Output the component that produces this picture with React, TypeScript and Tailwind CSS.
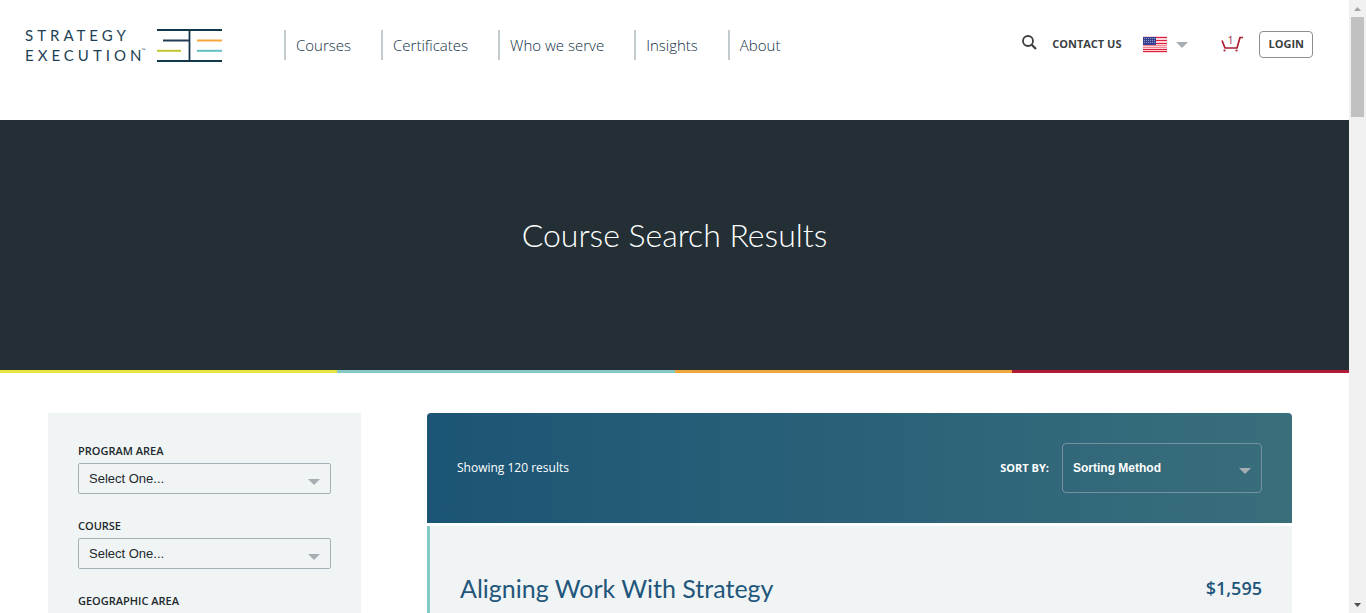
import React from 'react';

const navItems = ['Courses', 'Certificates', 'Who we serve', 'Insights', 'About'];
const filters = [
  { id: 'program-area', label: 'PROGRAM AREA' },
  { id: 'course', label: 'COURSE' },
  { id: 'geographic-area', label: 'GEOGRAPHIC AREA' },
];

function Caret({ className }: { className: string }) {
  return (
    <svg viewBox="0 0 12 6" className={className} aria-hidden="true">
      <path d="M0 0H12L6 6Z" fill="currentColor" />
    </svg>
  );
}

function Logo() {
  return (
    <a href="#" className="flex w-[197px] shrink-0 items-center justify-between">
      <span className="whitespace-nowrap font-['Lato'] text-[15px] leading-5 tracking-[4px] text-[#1d3f55]">
        STRATEGY
        <br />
        <span className="relative">
          EXECUTION
          <span className="absolute right-0 top-0 text-[5px] leading-[8px] tracking-normal">™</span>
        </span>
      </span>
      <svg viewBox="0 0 65 34" className="h-[34px] w-[65px]" fill="none" strokeWidth="2" aria-hidden="true">
        <path d="M0 2H65M0 33H65M32.500 1V33" stroke="#12364a" strokeWidth="1.800" />
        <path d="M6 12.500H32" stroke="#233b52" />
        <path d="M40 12.500H65" stroke="#f6a63a" />
        <path d="M0 22.800H24" stroke="#c3c62f" />
        <path d="M40 22.800H65" stroke="#62bfc5" />
      </svg>
    </a>
  );
}

function Flag() {
  return (
    <svg viewBox="0 0 24 17" className="h-[17px] w-6" shapeRendering="crispEdges" aria-hidden="true">
      <rect width="24" height="17" fill="#fbd3d8" />
      <path d="M0 1.500H24M0 4.500H24M0 7.500H24M0 13.500H24M0 15.500H24" stroke="#e0203a" />
      <path d="M0 9.500H24M0 11.500H24" stroke="#ee8791" />
      <rect y="1" width="13" height="8" fill="#37418f" />
      <path d="M1 2.500H12M1 4.500H12M1 6.500H12" stroke="#8d94c8" strokeDasharray="1 1" />
    </svg>
  );
}

function Header() {
  return (
    <header className="flex h-[120px] items-start pl-[25px] pr-9">
      <div className="flex pt-[25px]">
        <Logo />
      </div>
      <nav className="ml-[62px] flex gap-[30px] pt-[30px]">
        {navItems.map((item) => (
          <a
            key={item}
            href="#"
            className="h-[30px] whitespace-nowrap border-l-2 border-[#c3cbcf] pl-2.5 text-[15px] font-light leading-[30px] text-[#0f2f45]"
          >
            {item}
          </a>
        ))}
      </nav>
      <div className="ml-auto mt-[31px] flex h-[27px] items-center text-[11px] font-bold text-[#3b3f42]">
        <button type="button" aria-label="Search" className="mb-1 mr-[15px]">
          <svg viewBox="0 0 15 15" className="h-[15px] w-[15px]" fill="none" stroke="#3b3f42" aria-hidden="true">
            <circle cx="6" cy="6" r="5" strokeWidth="1.800" />
            <path d="M9.700 9.700L14 14" strokeWidth="2.200" />
          </svg>
        </button>
        <a href="#" className="mr-[22px] whitespace-nowrap">CONTACT US</a>
        <button type="button" aria-label="Choose country" className="mr-[33px] flex items-center gap-[9px]">
          <Flag />
          <Caret className="h-1.5 w-3 text-[#a6aeb3]" />
        </button>
        <a href="#" aria-label="Cart, 1 item" className="mb-1 mr-4">
          <svg viewBox="0 0 22 20" className="h-5 w-[22px]" aria-hidden="true">
            <path d="M1 7.500L4 15H16L19 4.500H22" fill="none" stroke="#a91e32" strokeWidth="1.700" />
            <circle cx="3.500" cy="17.500" r="1.100" fill="#a91e32" />
            <circle cx="15.500" cy="17.500" r="1.100" fill="#a91e32" />
            <text x="9.500" y="11" textAnchor="middle" fontSize="10" fontWeight="400" fill="#a01838">1</text>
          </svg>
        </a>
        <button type="button" className="h-[27px] rounded border border-[#8b8f92] px-2">LOGIN</button>
      </div>
    </header>
  );
}

function Scrollbar() {
  return (
    <div className="flex w-[17px] shrink-0 flex-col items-center bg-[#f1f1f1]" aria-hidden="true">
      <div className="flex h-[17px] items-center">
        <svg viewBox="0 0 7 4" className="h-1 w-[7px]"><path d="M0 4L3.500 0L7 4Z" fill="#a3a3a3" /></svg>
      </div>
      <div className="h-[100px] w-[13px] bg-[#c1c1c1]" />
      <div className="mt-auto flex h-[17px] items-center">
        <svg viewBox="0 0 7 4" className="h-1 w-[7px]"><path d="M0 0H7L3.500 4Z" fill="#505050" /></svg>
      </div>
    </div>
  );
}

export default function App() {
  return (
    <div className="flex h-screen bg-white font-['Open_Sans',sans-serif]">
      <div className="min-w-0 flex-1 overflow-hidden">
        <Header />
        <section className="flex h-[250px] items-center justify-center bg-[#232f35] pb-5">
          <h1 className="font-['Lato',sans-serif] text-[32px] font-light leading-10 text-white">
            Course Search Results
          </h1>
        </section>
        <div className="grid h-[3px] grid-cols-4">
          <div className="bg-[#e9e43c]" />
          <div className="bg-[#84c9c6]" />
          <div className="bg-[#f0a63a]" />
          <div className="bg-[#b3193a]" />
        </div>
        <main className="flex items-start gap-[66px] pl-12 pr-[57px] pt-10">
          <form className="flex w-[313px] shrink-0 flex-col gap-6 bg-[#f0f4f5] p-[30px]">
            {filters.map(({ id, label }) => (
              <div key={id} className="flex flex-col">
                <label htmlFor={id} className="h-5 text-[11px] font-semibold leading-4 text-[#22282c]">
                  {label}
                </label>
                <div className="relative">
                  <select
                    id={id}
                    className="block h-[31px] w-full appearance-none rounded-xs border border-[#a6b1b7] bg-transparent px-2.5 font-['Liberation_Sans',sans-serif] text-[13px] text-[#22282c]"
                  >
                    <option>Select One...</option>
                  </select>
                  <Caret className="pointer-events-none absolute right-[11px] top-4 h-1.5 w-3 text-[#a6aeb3]" />
                </div>
              </div>
            ))}
          </form>
          <section className="flex min-w-0 flex-1 flex-col gap-[3px]">
            <div className="flex h-[110px] items-center justify-between rounded-t bg-linear-to-r from-[#1c5475] to-[#396f7b] px-[30px] text-white">
              <p className="text-xs font-medium">Showing 120 results</p>
              <div className="flex items-center gap-[13px]">
                <label htmlFor="sort" className="text-[11px] font-bold">SORT BY:</label>
                <div className="relative">
                  <select
                    id="sort"
                    className="block h-[50px] w-[200px] appearance-none rounded border border-[#7890a0] bg-transparent px-2.5 font-['Liberation_Sans',sans-serif] text-xs font-bold"
                  >
                    <option>Sorting Method</option>
                  </select>
                  <Caret className="pointer-events-none absolute right-[11px] top-[25px] h-1.5 w-3 text-[#a6aeb3]" />
                </div>
              </div>
            </div>
            <article className="flex h-[220px] items-start justify-between border-l-[3px] border-[#84c9c6] bg-[#f0f4f5] px-[30px] pt-[47px] text-[#1f567b]">
              <h2 className="font-['Lato',sans-serif] text-[25px] leading-[30px]">Aligning Work With Strategy</h2>
              <p className="text-lg font-semibold leading-[30px]">$1,595</p>
            </article>
          </section>
        </main>
      </div>
      <Scrollbar />
    </div>
  );
}
